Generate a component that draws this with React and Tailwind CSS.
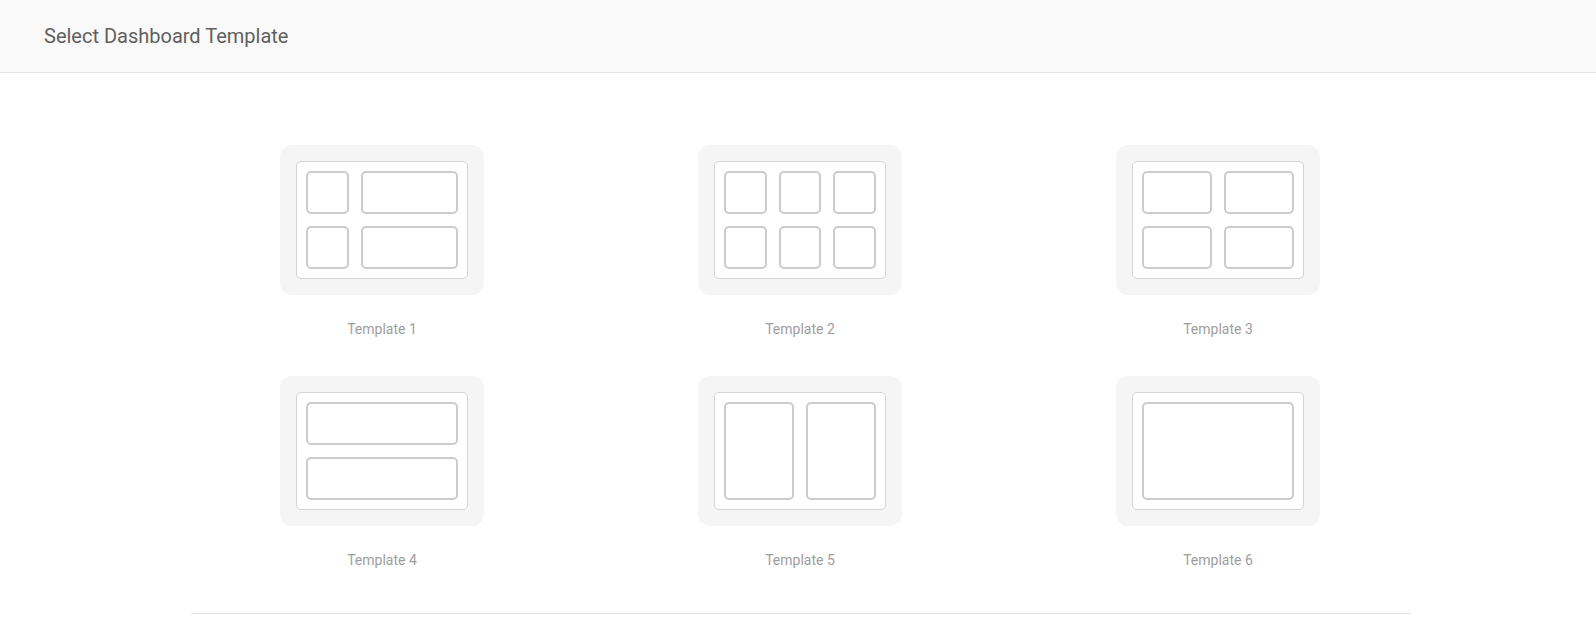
const templates = [
  { id: 1, cols: "grid-cols-[43px_1fr]", cells: 4 },
  { id: 2, cols: "grid-cols-3", cells: 6 },
  { id: 3, cols: "grid-cols-2", cells: 4 },
  { id: 4, cols: "grid-cols-1", cells: 2 },
  { id: 5, cols: "grid-cols-2", cells: 2, tall: true },
  { id: 6, cols: "grid-cols-1", cells: 1, tall: true },
];

function Preview({ t }) {
  return (
    <div className="w-[204px] rounded-xl bg-[#f5f5f5] p-4">
      <div className="h-[118px] w-[172px] rounded-[5px] border border-[#d4d4d4] bg-white p-[9px]">
        <div
          className={`grid h-full gap-3 ${t.cols} ${
            t.tall ? "grid-rows-1" : "grid-rows-2"
          }`}
        >
          {Array.from({ length: t.cells }).map((_, i) => (
            <div
              key={i}
              className="rounded-[5px] border-2 border-[#cccccc] bg-white"
            />
          ))}
        </div>
      </div>
    </div>
  );
}

export default function App() {
  return (
    <div
      className="min-h-screen bg-white"
      style={{ fontFamily: "Roboto, 'Noto Sans', Arial, sans-serif" }}
    >
      <header className="flex h-[73px] items-center border-b border-[#e4e4e4] bg-[#f9f9f9] px-11">
        <h1 className="text-[20px] font-normal text-[#606060]">
          Select Dashboard Template
        </h1>
      </header>

      <main className="mx-auto w-[1226px] pl-[6px] pt-[72px]">
        <div className="-ml-[2px] flex justify-center">
          <div className="grid grid-cols-[204px_204px_204px] gap-x-[214px] gap-y-[37px]">
            {templates.map((t) => (
              <button
                key={t.id}
                className="flex cursor-pointer flex-col items-center"
              >
                <Preview t={t} />
                <span className="mt-6 text-[14px] leading-5 text-[#9e9e9e]">
                  Template {t.id}
                </span>
              </button>
            ))}
          </div>
        </div>
        <div className="mt-[43px] border-t border-[#e2e2e2]" />
      </main>
    </div>
  );
}
